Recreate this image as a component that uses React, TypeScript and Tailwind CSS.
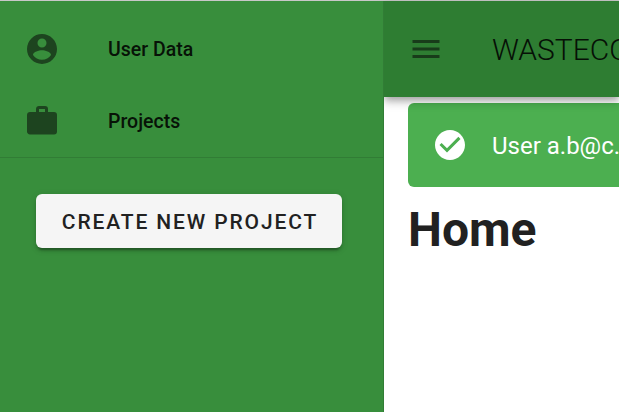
import React from "react";

type IconProps = { path: string; className?: string };

function Icon({ path, className = "" }: IconProps) {
  return (
    <svg viewBox="0 0 24 24" className={`size-9 shrink-0 ${className}`} fill="currentColor" aria-hidden="true">
      <path d={path} />
    </svg>
  );
}

const accountCircle =
  "M12,19.2C9.5,19.2 7.29,17.92 6,16C6.03,14 10,12.9 12,12.9C14,12.9 17.97,14 18,16C16.71,17.92 14.5,19.2 12,19.2M12,5A3,3 0 0,1 15,8A3,3 0 0,1 12,11A3,3 0 0,1 9,8A3,3 0 0,1 12,5M12,2A10,10 0 0,0 2,12A10,10 0 0,0 12,22A10,10 0 0,0 22,12C22,6.47 17.5,2 12,2Z";
const briefcase =
  "M10,2H14A2,2 0 0,1 16,4V6H20A2,2 0 0,1 22,8V19A2,2 0 0,1 20,21H4C2.89,21 2,20.1 2,19V8C2,6.89 2.89,6 4,6H8V4C8,2.89 8.89,2 10,2M14,6V4H10V6H14Z";
const menu = "M3,6H21V8H3V6M3,11H21V13H3V11M3,16H21V18H3V16Z";
const checkCircle =
  "M12 2C6.5 2 2 6.5 2 12S6.5 22 12 22 22 17.5 22 12 17.5 2 12 2M10 17L5 12L6.41 10.59L10 14.17L17.59 6.58L19 8L10 17Z";

function NavItem({ icon, label }: { icon: string; label: string }) {
  return (
    <a className="flex h-[72px] items-center gap-12 px-6">
      <Icon path={icon} className="text-[#1d441f]" />
      <span className="pt-0.5 text-[19.5px] leading-6 font-medium text-[#071207]">{label}</span>
    </a>
  );
}

export default function App() {
  return (
    <div className="flex h-screen w-full flex-col overflow-hidden bg-white font-['Roboto',sans-serif]">
      <div className="h-px shrink-0 bg-[#c8c8c8]" />
      <div className="flex min-h-0 flex-1">
        <aside className="z-20 w-[384px] shrink-0 border-r border-[#317d35] bg-[#388e3c]">
          <nav className="border-b border-[#317d35] pt-3">
            <NavItem icon={accountCircle} label="User Data" />
            <NavItem icon={briefcase} label="Projects" />
          </nav>
          <div className="px-9 pt-9">
            <button className="flex h-[54px] w-[306px] items-center justify-center rounded-[6px] bg-[#f5f5f5] pt-[3px] pl-[2px] text-[21px] font-medium tracking-[1.875px] whitespace-nowrap text-[#212121] shadow-[0_4.5px_1.5px_-3px_rgba(0,0,0,0.2),0_3px_3px_0_rgba(0,0,0,0.14),0_1.5px_7.5px_0_rgba(0,0,0,0.12)]">
              CREATE NEW PROJECT
            </button>
          </div>
        </aside>
        <div className="flex min-w-0 flex-1 flex-col">
          <header className="z-10 flex h-24 shrink-0 items-center gap-12 bg-[#2e7d32] px-6 shadow-[0_3px_6px_-1.5px_rgba(0,0,0,0.2),0_6px_7.5px_0_rgba(0,0,0,0.14),0_1.5px_15px_0_rgba(0,0,0,0.12)]">
            <Icon path={menu} className="text-[#183c1a]" />
            <span className="text-[30px] font-light whitespace-nowrap text-[#061006]">WASTECONTROL</span>
          </header>
          <main className="px-6 pt-1.5">
            <div className="flex h-[84px] w-[600px] items-center gap-6 rounded-[6px] bg-[#4caf50] px-6 text-white">
              <Icon path={checkCircle} />
              <span className="pt-0.5 text-2xl whitespace-nowrap">User a.b@c.de</span>
            </div>
            <h1 className="mt-[7px] text-[48px] leading-[72px] font-bold text-[#212121]">Home</h1>
          </main>
        </div>
      </div>
    </div>
  );
}
